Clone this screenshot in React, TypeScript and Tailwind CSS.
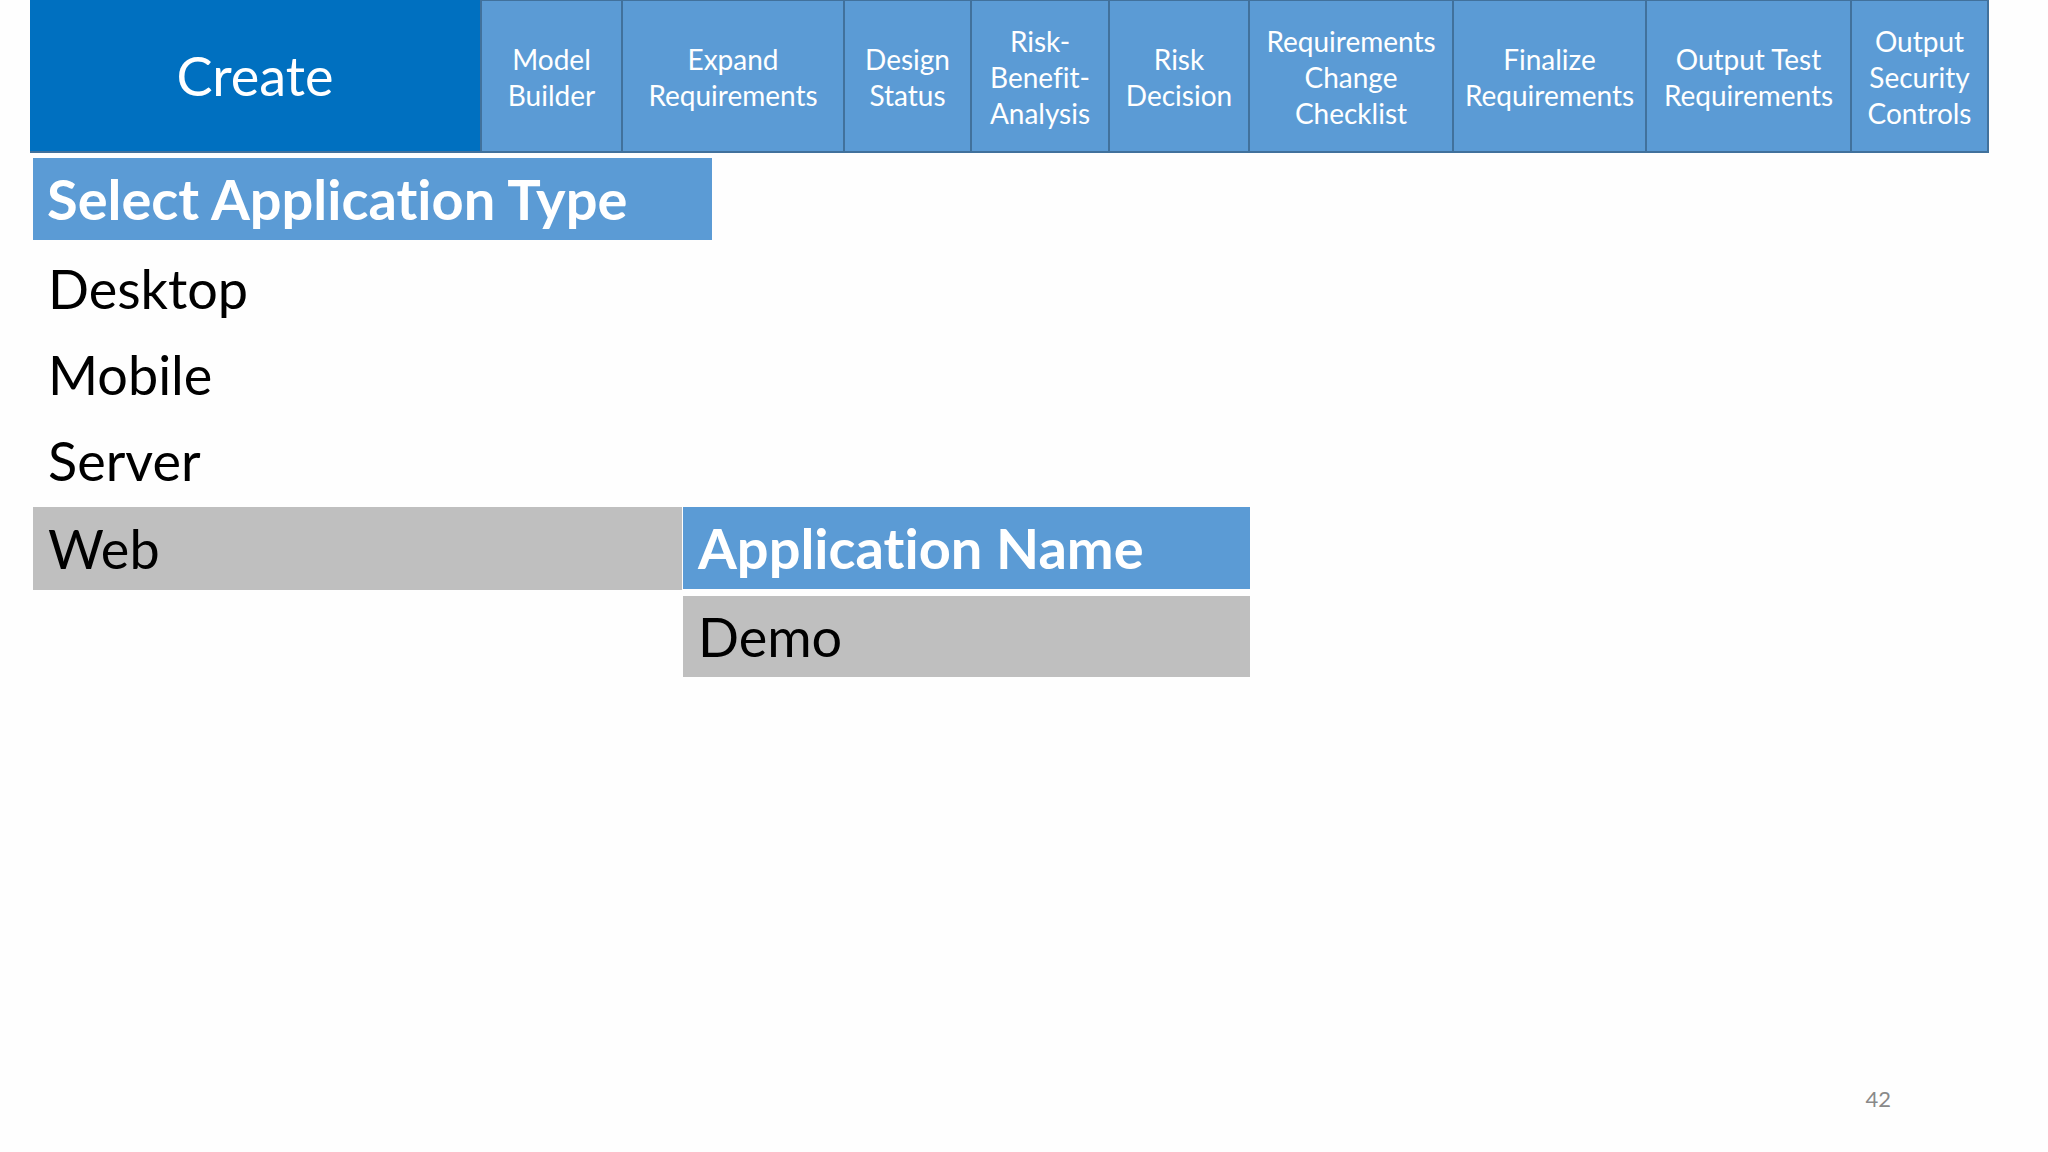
const tabs: { label: string[]; w: string }[] = [
  { label: ["Model", "Builder"], w: "w-[141px]" },
  { label: ["Expand", "Requirements"], w: "w-[222px]" },
  { label: ["Design", "Status"], w: "w-[127px]" },
  { label: ["Risk-", "Benefit-", "Analysis"], w: "w-[138px]" },
  { label: ["Risk", "Decision"], w: "w-[140px]" },
  { label: ["Requirements", "Change", "Checklist"], w: "w-[204px]" },
  { label: ["Finalize", "Requirements"], w: "w-[193px]" },
  { label: ["Output Test", "Requirements"], w: "w-[205px]" },
  { label: ["Output", "Security", "Controls"], w: "w-[137px]" },
];

const types = ["Desktop", "Mobile", "Server"];

export default function App() {
  return (
    <div className="w-[2048px] h-[1152px] bg-[#fefefe] flex flex-col font-['Lato',sans-serif] text-black [font-variant-ligatures:none]">
      {/* top nav */}
      <div className="flex h-[153px] ml-[30px] w-[1959px] border-b-2 border-[#41719c]">
        <div className="w-[452px] bg-[#0070c0] flex items-center justify-center text-white text-[54px] border-r-2 border-[#41719c]">
          Create
        </div>
        {tabs.map((t, i) => (
          <div
            key={i}
            className={`${t.w} bg-[#5b9bd5] border-r-2 border-t border-[#41719c] flex items-center justify-center text-center text-white text-[28px] leading-[36px] pt-[1px]`}
          >
            <div>
              {t.label.map((l) => (
                <div key={l}>{l}</div>
              ))}
            </div>
          </div>
        ))}
      </div>

      {/* body */}
      <div className="ml-[33px] mt-[5px] flex flex-col">
        <div className="w-[679px] h-[82px] bg-[#5b9bd5] flex items-center pl-[14px] text-white font-bold text-[56px]">
          Select Application Type
        </div>
        <div className="flex flex-col pt-[5px] pb-[4px]">
          {types.map((t) => (
            <div key={t} className="h-[86px] flex items-center pl-[15px] text-[54px]">
              {t}
            </div>
          ))}
        </div>
        <div className="flex gap-[1px]">
          <div className="w-[649px] h-[83px] bg-[#bfbfbf] flex items-center pl-[15px] text-[54px]">
            Web
          </div>
          <div className="flex flex-col gap-[7px]">
            <div className="w-[567px] h-[82px] bg-[#5b9bd5] flex items-center pl-[15px] text-white font-bold text-[56px]">
              Application Name
            </div>
            <div className="w-[567px] h-[81px] bg-[#bfbfbf] flex items-center pl-[15px] text-[54px]">
              Demo
            </div>
          </div>
        </div>
      </div>

      <div className="flex-1" />
      <div className="flex justify-end pr-[157px] pb-[37px] text-[22px] text-[#898989]">42</div>
    </div>
  );
}
